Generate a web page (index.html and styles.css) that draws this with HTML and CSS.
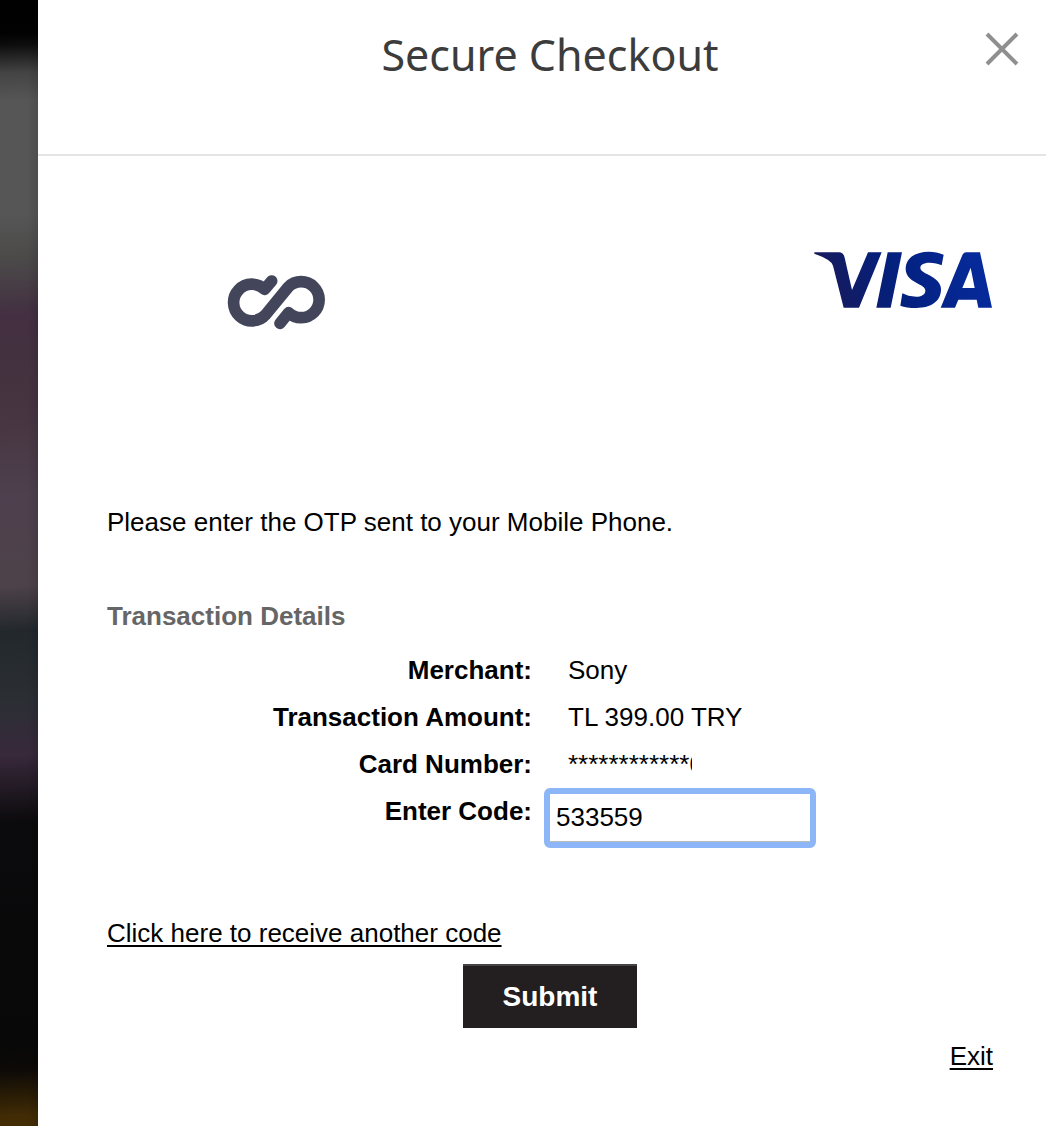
FILE: index.html
```html
<!DOCTYPE html>
<html lang="en">
<head>
<meta charset="utf-8">
<meta name="viewport" content="width=device-width, initial-scale=1">
<title>Secure Checkout</title>
<link rel="stylesheet" href="styles.css">
</head>
<body>
<div class="backdrop"></div>
<div class="panel">
  <header class="header">
    <h1 class="title">Secure Checkout</h1>
    <button class="close" type="button" aria-label="Close">
      <svg width="36" height="36" viewBox="0 0 36 36"><path d="M3 3 33 33M33 3 3 33" stroke="#8f8f8f" stroke-width="4" fill="none"/></svg>
    </button>
  </header>
  <main class="content">
    <div class="logos">
      <svg class="bank" width="100" height="56" viewBox="50 43 300 168" role="img" aria-label="Bank">
        <path d="M184 64 163 89A55 55 0 1 0 166 165L234 82A54 54 0 1 1 235 159L209 191" fill="none" stroke="#43465a" stroke-width="35" stroke-linecap="round" stroke-linejoin="round"/>
      </svg>
      <svg class="visa" width="180" height="58" viewBox="40 45 540 174" role="img" aria-label="Visa">
        <defs>
          <linearGradient id="visa-blue" gradientUnits="userSpaceOnUse" x1="90" y1="200" x2="560" y2="60">
            <stop offset="0" stop-color="#171a5c"/>
            <stop offset=".4" stop-color="#04207c"/>
            <stop offset="1" stop-color="#062b9e"/>
          </linearGradient>
        </defs>
        <path fill="url(#visa-blue)" fill-rule="evenodd" d="M44 52H118Q132 53 135 68L157 165 205 52H246L178 218H132L100 92Q95 74 44 56ZM264 52H307L273 218H230ZM432 59C418 53 403 50 387 50 345 50 318 71 318 102 318 126 339 138 355 146 371 154 377 159 377 167 377 179 363 185 350 185 332 185 320 181 308 175L302 212C313 217 330 219 350 219 394 219 424 199 424 163 424 144 410 131 382 117 367 109 362 105 362 98 362 90 371 83 389 83 404 83 415 86 426 91ZM500 52H541L577 218H536L531 194H476L466 218H423L487 63Q491 52 500 52ZM488 159H525L513 98Z"/>
      </svg>
    </div>
    <p class="message">Please enter the OTP sent to your Mobile Phone.</p>
    <h2 class="subtitle">Transaction Details</h2>
    <form class="form">
      <table class="details">
        <tr><th scope="row">Merchant:</th><td>Sony</td></tr>
        <tr><th scope="row">Transaction Amount:</th><td>TL 399.00 TRY</td></tr>
        <tr><th scope="row">Card Number:</th><td><span class="card">************0</span></td></tr>
        <tr><th scope="row"><label for="code">Enter Code:</label></th><td class="entry"><input class="code" id="code" type="text" value="533559"></td></tr>
      </table>
      <a class="resend" href="#">Click here to receive another code</a>
      <button class="submit" type="submit">Submit</button>
      <a class="exit" href="#">Exit</a>
    </form>
  </main>
</div>
</body>
</html>
```
FILE: styles.css
```css
* {
  box-sizing: border-box;
}

body {
  margin: 0;
  min-height: 100vh;
  display: flex;
  background: #fff;
  color: #000;
  font: 26px/30px "Liberation Sans", Arial, sans-serif;
}

.backdrop {
  flex: 0 0 38px;
  background:
    linear-gradient(90deg, transparent 70%, rgba(0, 0, 0, .1)),
    linear-gradient(178deg,
      #000 0, #020202 3%, #0d0d0d 4%, #444 6.5%, #565656 9%, #565656 19%,
      #4b4a49 23%, #432f41 28%, #46343f 36%, #4e404e 44%, #4d4249 52%,
      #22282c 56%, #2b2f34 62%, #38293b 67%, #0b0a0c 73%, #080808 93%,
      #0d0a07 95%, #402b04 99%, #442d04 100%);
}

.panel {
  flex: 1;
  min-width: 0;
}

.header {
  position: relative;
  padding: 24px 53px 68px 69px;
  border-bottom: 2px solid #e4e4e4;
}

.title {
  margin: 0;
  color: #3c3c3c;
  font: 400 43px/62px "Noto Sans", sans-serif;
  text-align: center;
}

.close {
  position: absolute;
  top: 31px;
  right: 26px;
  padding: 0;
  border: 0;
  background: none;
}

.close svg {
  display: block;
}

.content {
  padding: 94px 53px 48px 69px;
}

.logos {
  display: flex;
  justify-content: space-between;
  align-items: flex-start;
  height: 257px;
}

.bank {
  margin: 24px 0 0 120px;
}

.message {
  margin: 0 0 64px;
}

.subtitle {
  margin: 0 0 16px;
  color: #666;
  font-size: 26px;
}

.form {
  display: flex;
  flex-direction: column;
}

.details {
  width: 100%;
  border-collapse: collapse;
}

.details th,
.details td {
  padding: 8px 0 9px;
  vertical-align: top;
}

.details th {
  width: 425px;
  text-align: right;
}

.details td {
  padding-left: 36px;
}

.card {
  display: block;
  width: 124px;
  height: 30px;
  overflow: hidden;
}

.details .entry {
  padding: 0 0 0 12px;
}

.code {
  display: block;
  width: 272px;
  height: 60px;
  padding: 0 6px 2px;
  border: 6px solid #8db6f8;
  border-radius: 6px;
  outline: 0;
  background: #fff;
  box-shadow: inset 0 -1px #bbb;
  color: #000;
  font: inherit;
}

.resend,
.exit {
  color: #000;
  text-decoration-thickness: 2px;
  text-underline-offset: 3px;
}

.resend {
  align-self: flex-start;
  margin: 70px 0 16px;
}

.submit {
  align-self: center;
  width: 174px;
  height: 64px;
  padding: 0;
  border: 0;
  border-top: 2px solid #444;
  background: #231f20;
  color: #fff;
  font: bold 28px/32px "Liberation Sans", Arial, sans-serif;
}

.exit {
  align-self: flex-end;
  margin-top: 13px;
}
```
